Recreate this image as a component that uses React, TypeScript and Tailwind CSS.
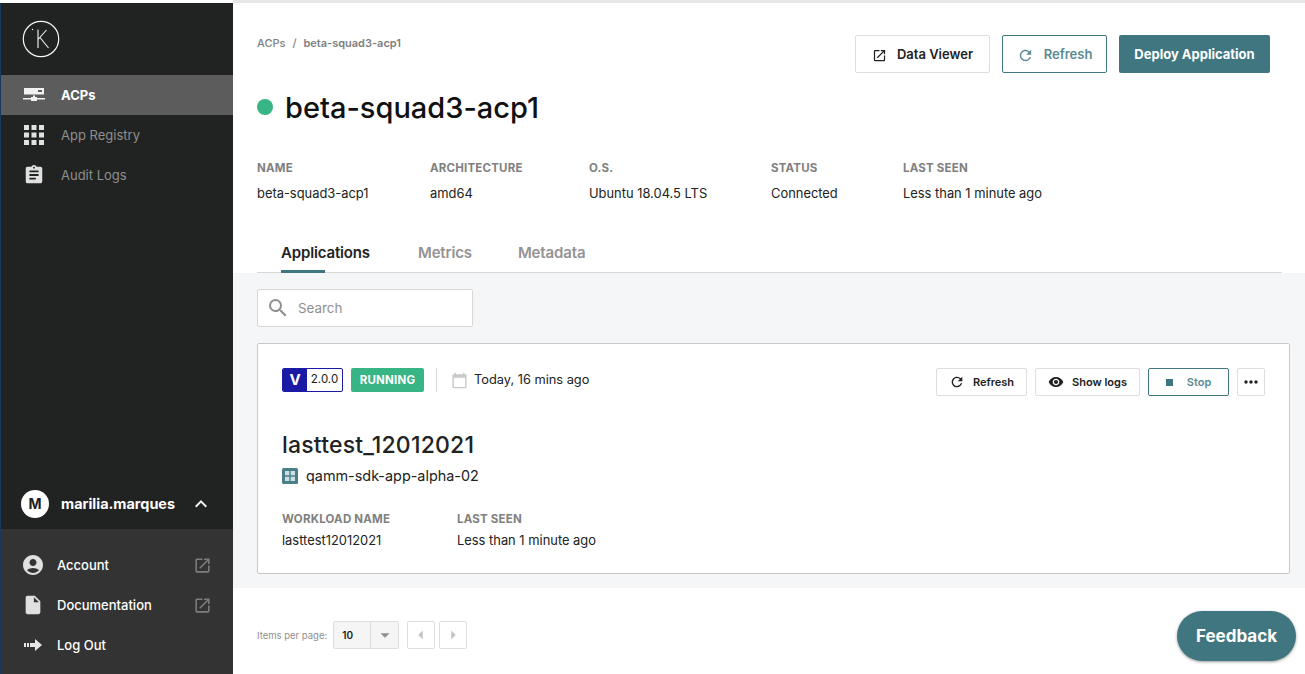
import { MdApps, MdAssignment, MdAccountCircle, MdInsertDriveFile, MdOpenInNew, MdRefresh, MdVisibility, MdMoreHoriz, MdSearch, MdExpandLess, MdArrowDropDown, MdArrowLeft, MdArrowRight, MdCalendarToday } from "react-icons/md";

function ServerIcon() {
  return (
    <svg width="22" height="14" viewBox="0 0 22 14" fill="#f2f2f2">
      <path d="M1 0h20v6.500H1z" />
      <rect x="15" y="2" width="4" height="2" fill="#5c5c5c" />
      <path d="M0 10h8V9h2V7.500h2V9h2v1h8v1.500h-8v1.500H8v-1.500H0z" />
    </svg>
  );
}

function LogOutIcon() {
  return (
    <svg width="20" height="14" viewBox="0 0 20 14" fill="#e6e6e6">
      <rect x="1" y="5" width="2" height="4" />
      <rect x="4" y="5" width="2" height="4" />
      <path d="M7 5h5V1l7 6-7 6V9H7z" />
    </svg>
  );
}

function NavItem({ icon, label, active }: { icon: React.ReactNode; label: string; active?: boolean }) {
  return (
    <div className={active ? "flex h-10 items-center bg-[#5c5c5c]" : "flex h-10 items-center"}>
      <div className="flex w-[60px] justify-center pl-[5px]">{icon}</div>
      <span className={active ? "pt-[2px] text-[13px] font-bold text-white" : "pt-[2px] text-[13px] text-[#8f8f8f]"}>{label}</span>
    </div>
  );
}

function MenuItem({ icon, label, ext }: { icon: React.ReactNode; label: string; ext?: boolean }) {
  return (
    <div className="flex h-10 items-center pr-[21px]">
      <div className="flex w-[56px] justify-center pl-[8px]">{icon}</div>
      <span className="flex-1 pt-[2px] text-[13px] font-medium text-white">{label}</span>
      {ext && <MdOpenInNew size={19} className="text-[#7d7d7d]" />}
    </div>
  );
}

const info = [
  { label: "NAME", value: "beta-squad3-acp1", w: "w-[173px]" },
  { label: "ARCHITECTURE", value: "amd64", w: "w-[159px]" },
  { label: "O.S.", value: "Ubuntu 18.04.5 LTS", w: "w-[182px]" },
  { label: "STATUS", value: "Connected", w: "w-[132px]" },
  { label: "LAST SEEN", value: "Less than 1 minute ago", w: "w-[200px]" },
];

export default function App() {
  return (
    <div className="relative flex h-[674px] w-[1305px] overflow-hidden bg-white font-['Inter',sans-serif] text-[#212222]">
      {/* sidebar */}
      <aside className="mt-[3px] flex w-[233px] shrink-0 flex-col border-l border-[#16395c] bg-[#212222]">
        <div className="flex h-[72px] items-center pl-[21px]">
          <svg width="38" height="38" viewBox="0 0 38 38" fill="none" stroke="#f7f7f7">
            <circle cx="19" cy="19" r="17.700" strokeWidth="1.200" />
            <path d="M16 9.500v18.500M16 19.500L24.500 10M18 17.500L26.500 28" strokeWidth="1.100" />
            <circle cx="10.500" cy="9.500" r="0.700" fill="#f7f7f7" stroke="none" />
          </svg>
        </div>
        <NavItem active icon={<ServerIcon />} label="ACPs" />
        <NavItem icon={<MdApps size={24} className="scale-[1.25] text-[#e0e0e0]" />} label="App Registry" />
        <NavItem icon={<MdAssignment size={22} className="text-[#e0e0e0]" />} label="Audit Logs" />
        <div className="flex-1" />
        <div className="flex h-[49px] items-center pb-[2px] pl-5 pr-5">
          <div className="mr-3 flex size-7 items-center justify-center rounded-full bg-white text-[14px] font-bold text-[#212222]">M</div>
          <span className="flex-1 text-[14.400px] font-bold text-white">marilia.marques</span>
          <MdExpandLess size={24} className="text-[#f2f2f2]" />
        </div>
        <div className="flex h-[145px] flex-col justify-end bg-[#333333] pb-[9px]">
          <MenuItem icon={<MdAccountCircle size={24} className="text-[#e0e0e0]" />} label="Account" ext />
          <MenuItem icon={<MdInsertDriveFile size={22} className="text-[#e0e0e0]" />} label="Documentation" ext />
          <MenuItem icon={<LogOutIcon />} label="Log Out" />
        </div>
      </aside>

      {/* main */}
      <main className="flex min-w-0 flex-1 flex-col border-t-[3px] border-t-[#e6e6e6] bg-white">
        <div className="h-[270px] pl-6 pr-[23px]">
          <div className="flex items-start justify-between pr-3">
            <div className="pt-8 text-[11px] font-medium text-[#808080]">
              ACPs <span className="mx-1">/</span> <span className="font-semibold">beta-squad3-acp1</span>
            </div>
            <div className="flex gap-3 pt-8">
              <button className="flex h-[38px] w-[135px] items-center justify-center gap-[10px] rounded-[2px] border border-[#dedede] pt-[2px] text-[13px] font-semibold">
                <MdOpenInNew size={15} />
                Data Viewer
              </button>
              <button className="flex h-[38px] w-[105px] items-center justify-center gap-[10px] rounded-[2px] border border-[#40767f] pt-[2px] text-[13px] font-semibold text-[#5a8a92]">
                <MdRefresh size={17} />
                Refresh
              </button>
              <button className="h-[38px] w-[151px] rounded-[2px] bg-[#40767f] pt-[2px] text-[13px] font-bold text-white">Deploy Application</button>
            </div>
          </div>
          <div className="mt-[14px] flex h-10 items-center">
            <div className="mr-3 size-4 rounded-full bg-[#38b584]" />
            <h1 className="pt-[2px] text-[29px] font-medium text-[#111]">beta-squad3-acp1</h1>
          </div>
          <div className="mt-8 flex">
            {info.map((it) => (
              <div key={it.label} className={it.w}>
                <div className="h-[25px] text-[11.500px] font-bold leading-[18px] tracking-[0.2px] text-[#808080]">{it.label}</div>
                <div className="text-[12.900px] leading-[20px]">{it.value}</div>
              </div>
            ))}
          </div>
          <div className="mt-9 flex h-[33px] border-b border-[#d9d9d9] pl-6">
            <div className="relative mr-12 pt-[2px] text-[15px] font-semibold tracking-[-0.150px]">
              Applications
              <div className="absolute bottom-[-1px] left-0 h-[3px] w-11 bg-[#40767f]" />
            </div>
            <div className="mr-[46px] pt-[2px] text-[15px] font-semibold tracking-[-0.150px] text-[#939393]">Metrics</div>
            <div className="pt-[2px] text-[15px] font-semibold tracking-[-0.150px] text-[#939393]">Metadata</div>
          </div>
        </div>

        <div className="h-[315px] bg-[#f5f6f8] pl-6 pr-[15px] pt-4">
          <div className="flex h-[38px] w-[216px] items-center rounded-[2px] border border-[#d9d9d9] bg-white pl-2">
            <MdSearch size={24} className="text-[#8f8f8f]" />
            <span className="ml-2 text-[13.400px] text-[#8f8f8f]">Search</span>
          </div>
          <div className="mt-4 h-[231px] rounded-[2px] border border-[#c9c9c9] bg-white pl-6 pr-6 pt-6">
            <div className="flex items-start">
              <div className="flex h-6 items-center">
                <div className="flex h-6 w-[61px] overflow-hidden rounded-[2px] border border-[#1a1aa6]">
                  <div className="flex w-6 items-center justify-center bg-[#1a1aa6] text-[15px] font-bold text-white">V</div>
                  <div className="flex flex-1 items-center justify-center text-[11.500px]">2.0.0</div>
                </div>
                <div className="ml-2 flex h-6 w-[73px] items-center justify-center rounded-[2px] bg-[#38b584] pt-[2px] text-[11.500px] font-bold tracking-[0.2px] text-white">RUNNING</div>
                <div className="ml-3 h-6 w-px bg-[#d9d9d9]" />
                <MdCalendarToday size={17} className="ml-[14px] text-[#c9c9c9]" />
                <span className="ml-[6px] text-[12.800px]">Today, 16 mins ago</span>
              </div>
              <div className="flex-1" />
              <div className="flex gap-2">
                <button className="flex h-7 w-[91px] items-center justify-center gap-2 rounded-[2px] border border-[#dedede] text-[11px] font-semibold">
                  <MdRefresh size={16} />
                  Refresh
                </button>
                <button className="flex h-7 w-[105px] items-center justify-center gap-2 rounded-[2px] border border-[#dedede] text-[11px] font-semibold">
                  <MdVisibility size={16} />
                  Show logs
                </button>
                <button className="flex h-7 w-[81px] items-center justify-center gap-[14px] rounded-[2px] border border-[#40767f] text-[11px] font-semibold text-[#5a8a92]">
                  <div className="size-[7px] bg-[#40767f]" />
                  Stop
                </button>
                <button className="flex size-7 items-center justify-center rounded-[2px] border border-[#dedede]">
                  <MdMoreHoriz size={20} />
                </button>
              </div>
            </div>
            <div className="mt-[34px] text-[23px] font-medium leading-[30px] tracking-[0.2px]">lasttest_12012021</div>
            <div className="mt-[5px] flex items-center">
              <svg width="16" height="16" viewBox="0 0 16 16">
                <rect width="16" height="16" rx="1.500" fill="#4a7f88" />
                <path d="M3 3h4.300v4.300H3zM8.700 3H13v4.300H8.700zM3 8.700h4.300V13H3zM8.700 8.700H13V13H8.700z" fill="#cfe0e3" />
              </svg>
              <span className="ml-2 text-[14.400px]">qamm-sdk-app-alpha-02</span>
            </div>
            <div className="mt-[23px] flex">
              <div className="w-[175px]">
                <div className="h-[21px] text-[11.500px] font-bold leading-[18px] tracking-[0.2px] text-[#808080]">WORKLOAD NAME</div>
                <div className="text-[12.900px] leading-[20px]">lasttest12012021</div>
              </div>
              <div>
                <div className="h-[21px] text-[11.500px] font-bold leading-[18px] tracking-[0.2px] text-[#808080]">LAST SEEN</div>
                <div className="text-[12.900px] leading-[20px]">Less than 1 minute ago</div>
              </div>
            </div>
          </div>
        </div>

        <div className="flex flex-1 items-start pl-6 pt-[33px]">
          <span className="mr-[6px] mt-[8px] text-[9.500px] text-[#8f8f8f]">Items per page:</span>
          <div className="flex h-7 w-[66px] rounded-[2px] border border-[#dedede] bg-[#f5f5f5]">
            <div className="flex w-[37px] items-center border-r border-[#dedede] pl-2 text-[10px] font-semibold">10</div>
            <div className="flex flex-1 items-center justify-center">
              <MdArrowDropDown size={22} className="text-[#8f8f8f]" />
            </div>
          </div>
          <div className="ml-2 flex size-7 items-center justify-center rounded-[2px] border border-[#dedede]">
            <MdArrowLeft size={22} className="text-[#c4c4c4]" />
          </div>
          <div className="ml-1 flex size-7 items-center justify-center rounded-[2px] border border-[#dedede]">
            <MdArrowRight size={22} className="text-[#c4c4c4]" />
          </div>
        </div>
      </main>

      <button className="absolute left-[1177px] top-[611px] h-[50px] w-[119px] rounded-[25px] bg-[#40767f] pt-[2px] text-[17px] font-bold text-white shadow-[0_1px_3px_rgba(0,0,0,0.4)]">Feedback</button>
    </div>
  );
}
